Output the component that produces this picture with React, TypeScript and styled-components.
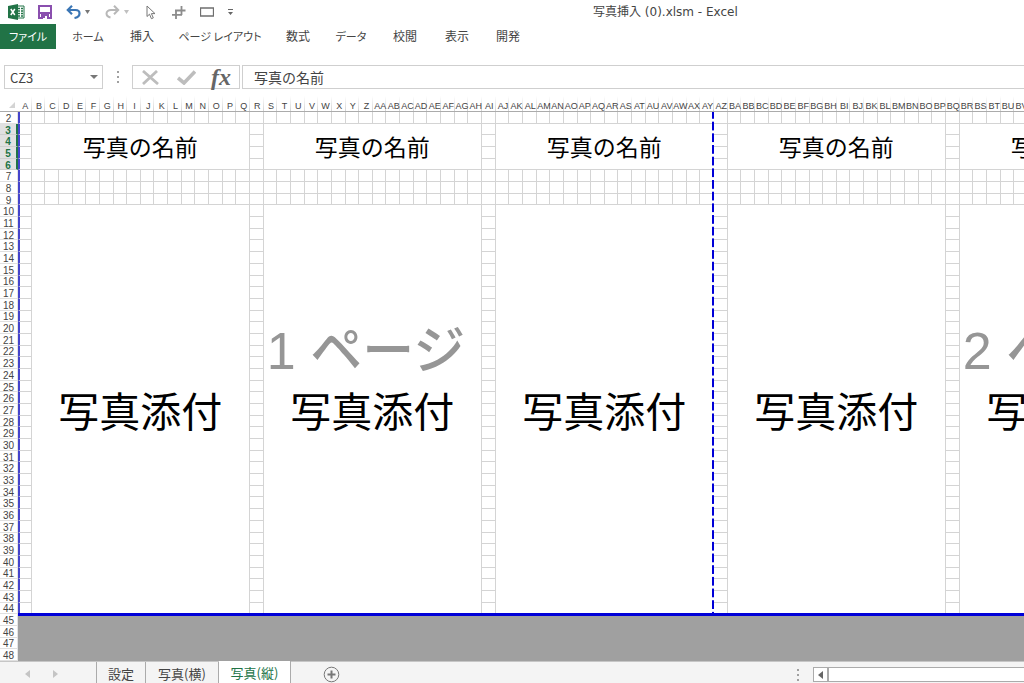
import React from "react";
import styled, { createGlobalStyle } from "styled-components";

const BLOCK_COUNT = 5;
const BLOCK_COLUMNS = 17;
const BLOCK_WIDTH = 232;
const COLUMN_COUNT = BLOCK_COUNT * BLOCK_COLUMNS;
const FIRST_ROW = 2;
const LAST_ROW = 48;
const LAST_PRINT_ROW = 44;
const ROW_COUNT = LAST_ROW - FIRST_ROW + 1;
const ROW_HEADER = 18;
const COLUMN_HEADER = 16;

const green = "#217346";
const blue = "#0000d8";
const line = "#d4d4d4";
const gothic = `"Noto Sans CJK JP", sans-serif`;

const GlobalStyle = createGlobalStyle`
  *, *::before, *::after { box-sizing: border-box; }
  body { margin: 0; background: #fff; color: #444; font-family: ${gothic}; }
  button, input { font: inherit; color: inherit; }
  button { padding: 0; border: 0; background: none; }
`;

const Window = styled.div`
  display: flex;
  flex-direction: column;
  height: 100vh;
  min-height: 480px;
  overflow: hidden;
`;

const TitleBar = styled.header`
  display: flex;
  align-items: center;
  flex: none;
  height: 24px;
`;

const QuickAccess = styled.div`
  display: flex;
  align-items: center;
  flex: none;
  width: 240px;
  height: 22px;
  padding-left: 8px;
`;

const ToolButton = styled.button<{ $width: number }>`
  display: flex;
  align-items: center;
  flex: none;
  width: ${(p) => p.$width}px;
  height: 20px;
`;

const WindowTitle = styled.h1`
  margin: 0 0 0 353px;
  font: 400 12px/24px "DejaVu Sans", ${gothic};
  white-space: nowrap;
`;

const RibbonTabs = styled.nav`
  display: flex;
  flex: none;
  height: 25px;
`;

const RibbonTab = styled.button<{ $width: number; $file?: boolean; $kanji?: boolean }>`
  flex: none;
  width: ${(p) => p.$width}px;
  margin-right: ${(p) => (p.$file ? 2 : 0)}px;
  padding-bottom: 2px;
  background: ${(p) => (p.$file ? green : "transparent")};
  color: ${(p) => (p.$file ? "#fff" : "#444")};
  font-size: ${(p) => (p.$kanji ? 12 : 11)}px;
  line-height: 22px;
  font-feature-settings: "palt";
  white-space: nowrap;
`;

const FormulaBar = styled.div`
  display: flex;
  flex: none;
  height: 24px;
  margin: 16px 0 7px 4px;
`;

const Framed = styled.div`
  display: flex;
  align-items: center;
  border: 1px solid #cfcfcf;
  background: #fff;
`;

const NameBox = styled(Framed)`
  flex: none;
  width: 99px;
`;

const NameInput = styled.input`
  width: 80px;
  height: 20px;
  padding: 0 0 0 5px;
  border: 0;
  outline: 0;
  background: none;
  font-size: 13px;
`;

const IconButton = styled.button<{ $width: number }>`
  display: flex;
  align-items: center;
  justify-content: center;
  width: ${(p) => p.$width}px;
  height: 22px;
`;

const Grip = styled.div<{ $width: number }>`
  display: flex;
  align-items: center;
  justify-content: center;
  flex: none;
  width: ${(p) => p.$width}px;
`;

const EntryButtons = styled(Framed)`
  flex: none;
  width: 108px;
  margin-right: 2px;
`;

const FormulaField = styled(Framed)`
  flex: 1;
  border-right: 0;
`;

const FormulaInput = styled.input`
  width: 100%;
  height: 20px;
  padding: 0 0 0 11px;
  border: 0;
  outline: 0;
  background: none;
  font-size: 14px;
`;

const SheetArea = styled.main`
  position: relative;
  flex: 1;
  min-height: 0;
  overflow: hidden;
`;

const Sheet = styled.table`
  display: grid;
  grid-template-columns: ${ROW_HEADER}px repeat(${COLUMN_COUNT}, minmax(0, 1fr));
  grid-template-rows: ${COLUMN_HEADER}px repeat(${ROW_COUNT}, minmax(0, 1fr));
  width: ${ROW_HEADER + BLOCK_COUNT * BLOCK_WIDTH}px;
  height: 100%;
  font-family: "Liberation Sans", sans-serif;

  thead, tbody, tr { display: contents; }
  th, td { padding: 0; min-width: 0; min-height: 0; }
`;

const Corner = styled.td`
  display: flex;
  align-items: flex-end;
  justify-content: flex-end;
  border-bottom: 1px solid #ababab;
`;

const ColumnHeading = styled.th`
  && { padding: 4px 0 0 1px; }
  display: flex;
  align-items: center;
  justify-content: center;
  border-bottom: 1px solid #ababab;
  background: linear-gradient(#fff, #d4d4d4) right / 1px 100% no-repeat;
  font-size: 9px;
  font-weight: 400;
  line-height: 10px;
  white-space: nowrap;
`;

const RowHeading = styled.th<{ $selected: boolean }>`
  && { padding-top: 3px; }
  display: flex;
  align-items: center;
  justify-content: center;
  border-right: ${(p) => (p.$selected ? `2px solid ${green}` : "1px solid #e4e4e4")};
  border-bottom: 1px solid ${(p) => (p.$selected ? "#cfcfcf" : "#e0e0e0")};
  background: ${(p) => (p.$selected ? "#e1e1e1" : "#fff")};
  color: ${(p) => (p.$selected ? green : "#444")};
  font-size: 10px;
  font-weight: ${(p) => (p.$selected ? 700 : 400)};
  line-height: 10px;
`;

const Cell = styled.td<{ $first?: boolean }>`
  border: 0 solid ${line};
  border-width: 0 1px 1px 0;
  ${(p) => p.$first && "border-left: 2px solid #4444cc;"}
`;

const MergedCell = styled(Cell)<{ $rows: number; $size: number }>`
  display: flex;
  align-items: center;
  justify-content: center;
  grid-column: span ${BLOCK_COLUMNS - 1};
  grid-row: span ${(p) => p.$rows};
  color: #000;
  font-family: ${gothic};
  font-size: ${(p) => p.$size}px;
  line-height: 1;
  white-space: nowrap;
`;

const OutsideCell = styled.td`
  grid-column: span ${COLUMN_COUNT};
  grid-row: span ${LAST_ROW - LAST_PRINT_ROW};
  margin-top: -1px;
  border-top: 3px solid ${blue};
  background: #a0a0a0;
`;

const PageLayer = styled.div`
  position: absolute;
  top: ${COLUMN_HEADER}px;
  left: ${ROW_HEADER}px;
  display: flex;
  height: calc((100% - ${COLUMN_HEADER}px) * ${LAST_PRINT_ROW - FIRST_ROW + 1} / ${ROW_COUNT});
  pointer-events: none;
`;

const Page = styled.div<{ $break?: boolean }>`
  position: relative;
  display: flex;
  align-items: center;
  justify-content: center;
  width: ${BLOCK_WIDTH * 3}px;
  padding-bottom: 24px;
  color: #969696;
  font: 500 52px/1 "Liberation Sans", ${gothic};
  white-space: nowrap;

  &::after {
    content: "";
    display: ${(p) => (p.$break ? "block" : "none")};
    position: absolute;
    top: 0;
    right: 0;
    width: 2px;
    height: 100%;
    background: linear-gradient(${blue} 75%, #fff 75%) 0 -2px / 100% calc(100% / 43);
  }
`;

const SheetBar = styled.footer`
  display: flex;
  align-items: stretch;
  flex: none;
  height: 22px;
  border-top: 1px solid #c6c6c6;
  background: #f4f4f4;
`;

const SheetScroll = styled.div`
  display: flex;
  align-items: center;
  justify-content: center;
  gap: 20px;
  width: 97px;
  padding: 2px 14px 0 0;
  border-right: 1px solid #ababab;
`;

const SheetTab = styled.button<{ $width: number; $active?: boolean }>`
  width: ${(p) => p.$width}px;
  margin-top: ${(p) => (p.$active ? -1 : 0)}px;
  padding-top: 2px;
  border-right: 1px solid #ababab;
  background: ${(p) => (p.$active ? "#fff" : "transparent")};
  color: ${(p) => (p.$active ? green : "#444")};
  font-size: 13px;
  line-height: 18px;
  white-space: nowrap;
`;

const AddSheet = styled.button`
  display: flex;
  align-items: center;
  margin-left: 32px;
  padding-top: 4px;
`;

const ScrollGroup = styled.div`
  display: flex;
  align-items: stretch;
  width: 241px;
  margin-left: auto;
  padding: 5px 0 1px;
`;

const ScrollTrack = styled.div`
  display: flex;
  flex: 1;
  border: 1px solid #ababab;
  border-right: 0;
  background: #fff;
`;

const ScrollArrow = styled.button`
  display: flex;
  align-items: center;
  justify-content: center;
  width: 15px;
  border-right: 2px solid #ababab;
`;

const columnName = (index: number): string =>
  index < 26
    ? String.fromCharCode(65 + index)
    : columnName(Math.floor(index / 26) - 1) + String.fromCharCode(65 + (index % 26));

const columns = Array.from({ length: COLUMN_COUNT }, (_, i) => columnName(i));
const rows = Array.from({ length: ROW_COUNT }, (_, i) => FIRST_ROW + i);
const blocks = Array.from({ length: BLOCK_COUNT }, (_, i) => i);

const ribbonTabs = [
  { label: "ファイル", width: 56, file: true },
  { label: "ホーム", width: 60 },
  { label: "挿入", width: 48, kanji: true },
  { label: "ページ レイアウト", width: 108 },
  { label: "数式", width: 48, kanji: true },
  { label: "データ", width: 58 },
  { label: "校閲", width: 50, kanji: true },
  { label: "表示", width: 54, kanji: true },
  { label: "開発", width: 48, kanji: true },
];

const Dots = () => (
  <svg width="2" height="12" viewBox="0 0 2 12" fill="#a0a0a0">
    <path d="M0 0h2v2H0zM0 5h2v2H0zM0 10h2v2H0z" />
  </svg>
);

const Caret = ({ color = "#777", size = 5 }: { color?: string; size?: number }) => (
  <svg width={size} height="4" viewBox="0 0 8 5" fill={color} preserveAspectRatio="none">
    <path d="M0 0h8L4 5z" />
  </svg>
);

const ExcelIcon = () => (
  <svg width="17" height="16" viewBox="0 0 17 16">
    <path d="M9 2h7v12H9z" fill="#fff" stroke={green} />
    <path d="M10 4.500h2M13 4.500h2M10 7h2M13 7h2M10 9.500h2M13 9.500h2M10 12h2M13 12h2" stroke={green} strokeWidth="1.300" />
    <path d="M0 2l10-2v16L0 14z" fill={green} />
    <path d="M2.800 5l4 6M6.800 5l-4 6" stroke="#fff" strokeWidth="1.500" />
  </svg>
);

const SaveIcon = () => (
  <svg width="14" height="14" viewBox="0 0 14 14" fill="none" stroke="#8a4fae" strokeWidth="2">
    <path d="M1 1h12v12H1z" />
    <path d="M1 8h12" />
    <path d="M3 9h8v4H3z" fill="#8a4fae" stroke="none" />
    <path d="M5 11h4v3H5z" fill="#fff" stroke="none" />
    <path d="M5 11h2v2H5z" fill="#8a4fae" stroke="none" />
  </svg>
);

const UndoIcon = () => (
  <svg width="15" height="14" viewBox="0 0 15 14" fill="none" stroke="#3b76b5" strokeWidth="2.200">
    <path d="M6 .8L1.800 5 6 9.200" />
    <path d="M2 5h7.500c2.500 0 4 1.500 4 3.500 0 2.500-2 4-5 4.500" />
  </svg>
);

const RedoIcon = () => (
  <svg width="15" height="14" viewBox="0 0 15 14" fill="none" stroke="#b8b8b8" strokeWidth="2">
    <path d="M9 .8L13.200 5 9 9.200" />
    <path d="M13 5H6C3.500 5 1.500 6.500 1.500 8.500 1.500 11 3.500 12 5.500 12.500" />
  </svg>
);

const PointerIcon = () => (
  <svg width="10" height="15" viewBox="0 0 10 15" fill="#fff" stroke="#777">
    <path d="M1 1v10.500l2.500-2.300 1.900 4.500 1.900-.8-1.900-4.300H9z" />
  </svg>
);

const HashIcon = () => (
  <svg width="14" height="13" viewBox="0 0 14 13" fill="none" stroke="#8c8c8c" strokeWidth="1.800">
    <path d="M9.500 0v9M4 4v9M3 4.500h10.500M0 8.800h10" />
  </svg>
);

const BoxIcon = () => (
  <svg width="14" height="10" viewBox="0 0 14 10" fill="#fff" stroke="#6f6f6f">
    <path d="M.5 1h13v8H.5z" strokeWidth="1.300" />
  </svg>
);

const CustomizeIcon = () => (
  <svg width="5" height="7" viewBox="0 0 5 7" fill="#666">
    <path d="M0 0h5v1H0zM0 3h5L2.500 6z" />
  </svg>
);

const CancelIcon = () => (
  <svg width="17" height="15" viewBox="0 0 17 15" fill="none" stroke="#bdbdbd" strokeWidth="2.800">
    <path d="M1 1l15 13M15 1L1 14" />
  </svg>
);

const EnterIcon = () => (
  <svg width="19" height="15" viewBox="0 0 19 15" fill="none" stroke="#bdbdbd" strokeWidth="3.600">
    <path d="M1 8l6 5L18 1.500" />
  </svg>
);

const FunctionLabel = styled.span`
  font: italic 700 24px/20px "Liberation Serif", serif;
  color: #666;
`;

const TriangleIcon = ({ back, color }: { back?: boolean; color: string }) => (
  <svg width="5" height="8" viewBox="0 0 5 8" fill={color}>
    <path d={back ? "M5 0v8L0 4z" : "M0 0v8l5-4z"} />
  </svg>
);

const SelectAllIcon = () => (
  <svg width="10" height="14" viewBox="0 0 10 14" fill="#d4d4d4">
    <path d="M7 5v6H1z" />
  </svg>
);

const AddIcon = () => (
  <svg width="17" height="17" viewBox="0 0 17 17" fill="none" stroke="#777">
    <circle cx="8.500" cy="8.500" r="7.300" />
    <path d="M8.500 4.500v8M4.500 8.500h8" strokeWidth="2" />
  </svg>
);

const blockCells = (row: number, block: number) => {
  const first = block === 0;
  const lead = <Cell key={`${block}-lead`} $first={first} />;
  if (row === 3 || row === 10) {
    const rowSpan = row === 3 ? 4 : LAST_PRINT_ROW - row + 1;
    return [
      lead,
      <MergedCell
        key={`${block}-merged`}
        colSpan={BLOCK_COLUMNS - 1}
        rowSpan={rowSpan}
        $rows={rowSpan}
        $size={row === 3 ? 23 : 41}
      >
        {row === 3 ? "写真の名前" : "写真添付"}
      </MergedCell>,
    ];
  }
  if ((row > 3 && row < 7) || row > 10) return [lead];
  return [
    lead,
    ...Array.from({ length: BLOCK_COLUMNS - 1 }, (_, i) => <Cell key={`${block}-${i}`} />),
  ];
};

export default function App() {
  return (
    <>
      <GlobalStyle />
      <Window>
        <TitleBar>
          <QuickAccess>
            <ToolButton $width={30} aria-label="Excel"><ExcelIcon /></ToolButton>
            <ToolButton $width={28} aria-label="上書き保存"><SaveIcon /></ToolButton>
            <ToolButton $width={19} aria-label="元に戻す"><UndoIcon /></ToolButton>
            <ToolButton $width={20} aria-label="元に戻す一覧"><Caret /></ToolButton>
            <ToolButton $width={19} aria-label="やり直し"><RedoIcon /></ToolButton>
            <ToolButton $width={22} aria-label="やり直し一覧"><Caret color="#c0c0c0" /></ToolButton>
            <ToolButton $width={26} aria-label="選択"><PointerIcon /></ToolButton>
            <ToolButton $width={28} aria-label="グリッド"><HashIcon /></ToolButton>
            <ToolButton $width={28} aria-label="四角形"><BoxIcon /></ToolButton>
            <ToolButton $width={8} aria-label="カスタマイズ"><CustomizeIcon /></ToolButton>
          </QuickAccess>
          <WindowTitle>写真挿入 (0).xlsm - Excel</WindowTitle>
        </TitleBar>

        <RibbonTabs>
          {ribbonTabs.map((tab) => (
            <RibbonTab key={tab.label} $width={tab.width} $file={tab.file} $kanji={tab.kanji}>
              {tab.label}
            </RibbonTab>
          ))}
        </RibbonTabs>

        <FormulaBar>
          <NameBox>
            <NameInput aria-label="名前ボックス" defaultValue="CZ3" />
            <IconButton $width={17} aria-label="名前の一覧"><Caret size={8} /></IconButton>
          </NameBox>
          <Grip $width={29}><Dots /></Grip>
          <EntryButtons>
            <IconButton $width={34} aria-label="キャンセル"><CancelIcon /></IconButton>
            <IconButton $width={38} aria-label="入力"><EnterIcon /></IconButton>
            <IconButton $width={32} aria-label="関数の挿入"><FunctionLabel>fx</FunctionLabel></IconButton>
          </EntryButtons>
          <FormulaField>
            <FormulaInput aria-label="数式バー" defaultValue="写真の名前" />
          </FormulaField>
        </FormulaBar>

        <SheetArea>
          <Sheet>
            <thead>
              <tr>
                <Corner><SelectAllIcon /></Corner>
                {columns.map((name) => (
                  <ColumnHeading key={name} scope="col">{name}</ColumnHeading>
                ))}
              </tr>
            </thead>
            <tbody>
              {rows.map((row) => (
                <tr key={row}>
                  <RowHeading scope="row" $selected={row >= 3 && row <= 6}>{row}</RowHeading>
                  {row <= LAST_PRINT_ROW && blocks.map((block) => blockCells(row, block))}
                  {row === LAST_PRINT_ROW + 1 && (
                    <OutsideCell colSpan={COLUMN_COUNT} rowSpan={LAST_ROW - LAST_PRINT_ROW} />
                  )}
                </tr>
              ))}
            </tbody>
          </Sheet>
          <PageLayer>
            <Page $break>1 ページ</Page>
            <Page>2 ページ</Page>
          </PageLayer>
        </SheetArea>

        <SheetBar>
          <SheetScroll>
            <IconButton $width={8} aria-label="前のシート"><TriangleIcon back color="#c4c4c4" /></IconButton>
            <IconButton $width={8} aria-label="次のシート"><TriangleIcon color="#c4c4c4" /></IconButton>
          </SheetScroll>
          <SheetTab $width={49}>設定</SheetTab>
          <SheetTab $width={73}>写真(横)</SheetTab>
          <SheetTab $width={72} $active>写真(縦)</SheetTab>
          <AddSheet aria-label="新しいシート"><AddIcon /></AddSheet>
          <ScrollGroup>
            <Grip $width={30}><Dots /></Grip>
            <ScrollTrack>
              <ScrollArrow aria-label="左へスクロール"><TriangleIcon back color="#666" /></ScrollArrow>
            </ScrollTrack>
          </ScrollGroup>
        </SheetBar>
      </Window>
    </>
  );
}
